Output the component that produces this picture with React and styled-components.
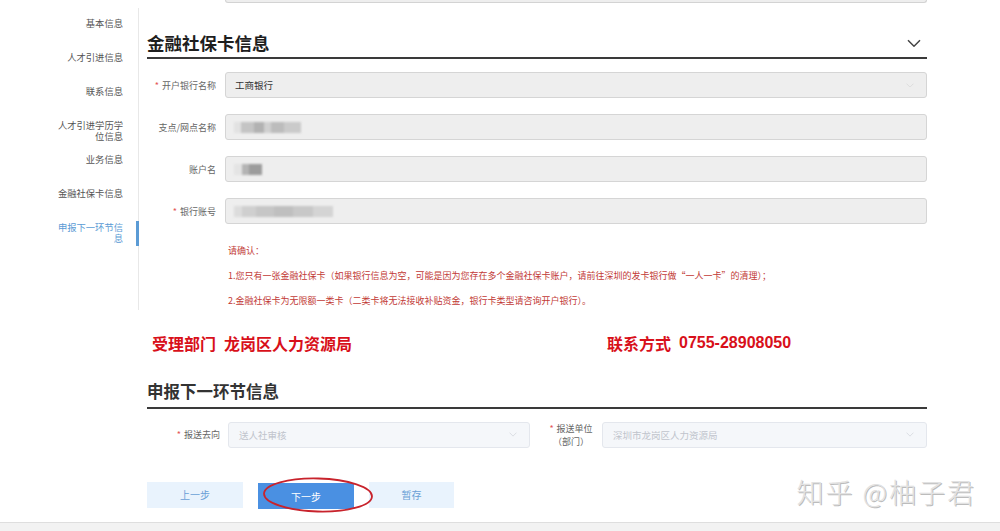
import React from "react";
import styled, { createGlobalStyle } from "styled-components";

// ================= Global =================

const GlobalStyle = createGlobalStyle`
  html, body {
    margin: 0;
    padding: 0;
    background: #ffffff;
  }
  body {
    font-family: "Noto Sans CJK SC", "Noto Sans", sans-serif;
    overflow: hidden;
  }
  * {
    box-sizing: border-box;
  }
`;

// ================= Layout =================

const Page = styled.div`
  position: relative;
  width: 1000px;
  height: 531px;
  overflow: hidden;
  display: flex;
  flex-direction: column;
`;

const Body = styled.div`
  display: flex;
  align-items: flex-start;
`;

const Sidebar = styled.nav`
  width: 139px;
  height: 302px;
  margin-top: 8px;
  padding: 9.5px 15px 0 56px;
  border-right: 1px solid #e8e8e8;
  flex-shrink: 0;
`;

const NavItem = styled.div`
  position: relative;
  height: 34px;
  font-size: 9.3px;
  line-height: 11px;
  text-align: right;
  color: ${({ $active }) => ($active ? "#5b9bd5" : "#555")};

  &::after {
    content: "";
    display: ${({ $active }) => ($active ? "block" : "none")};
    position: absolute;
    right: -16px;
    top: -1px;
    width: 3px;
    height: 25px;
    background: #5b9bd5;
  }
`;

const Main = styled.main`
  width: 780px;
  margin-left: 8px;
  display: flex;
  flex-direction: column;
`;

const PrevInput = styled.div`
  margin-left: 78px;
  height: 3px;
  background: #eeeeee;
  border: 1px solid #d3d3d3;
  border-top: none;
  border-radius: 0 0 3px 3px;
`;

const SectionHeader = styled.div`
  display: flex;
  align-items: center;
  justify-content: space-between;
  margin-top: ${({ $top }) => $top}px;
  padding-bottom: ${({ $pad }) => $pad}px;
  border-bottom: 2px solid #3a3a3a;
`;

const SectionTitle = styled.h2`
  margin: 0;
  font-size: ${({ $size }) => $size}px;
  line-height: 24px;
  font-weight: 700;
  color: ${({ $color }) => $color};
`;

const Collapse = styled.span`
  display: flex;
  margin-right: 6px;
  color: #444;
`;

// ================= Form =================

const FormRows = styled.div`
  display: flex;
  flex-direction: column;
  gap: 16px;
  margin-top: 13px;
`;

const Row = styled.div`
  display: flex;
  align-items: center;
  height: 26px;
`;

const NextRow = styled(Row)`
  margin-top: 13px;
`;

const Label = styled.label`
  width: ${({ $w }) => $w}px;
  margin-left: ${({ $ml }) => $ml || 0}px;
  margin-right: ${({ $gap }) => $gap}px;
  flex-shrink: 0;
  font-size: 9px;
  line-height: 13px;
  color: #666;
  white-space: nowrap;
  text-align: ${({ $center }) => ($center ? "center" : "right")};
`;

const Star = styled.span`
  color: #e45656;
  margin-right: 3px;
`;

const Field = styled.div`
  flex: ${({ $w }) => ($w ? "0 0 auto" : "1")};
  width: ${({ $w }) => ($w ? `${$w}px` : "auto")};
  height: 26px;
  display: flex;
  align-items: center;
  justify-content: space-between;
  padding: 0 12px 0 ${({ $pl }) => $pl || 9}px;
  background: ${({ $soft }) => ($soft ? "#f5f7fa" : "#eeeeee")};
  border: 1px solid ${({ $soft }) => ($soft ? "#e4e7ed" : "#d5d5d5")};
  border-radius: 3px;
  font-size: 9.5px;
  color: ${({ $soft }) => ($soft ? "#c0c4cc" : "#333")};
`;

const Mosaic = styled.span`
  display: inline-block;
  width: ${({ $w }) => $w}px;
  height: 11px;
  margin-left: -1px;
  background: ${({ $bg }) => $bg};
  filter: blur(1px);
`;

const Notes = styled.div`
  margin-top: 13.5px;
  padding-left: 81px;
  font-size: 9px;
  line-height: 25px;
  color: #c23a36;
`;

// ================= Contact =================

const Contact = styled.div`
  display: flex;
  margin-top: 20px;
  padding-left: 5px;
  font-size: 16px;
  line-height: 20px;
  font-weight: 700;
  color: #d8101a;
`;

const ContactItem = styled.div`
  width: ${({ $w }) => ($w ? `${$w}px` : "auto")};
  display: flex;
  gap: 8px;
`;

const Phone = styled.span`
  font-family: "Liberation Sans", Arial, sans-serif;
`;

// ================= Buttons =================

const Buttons = styled.div`
  display: flex;
  gap: 15px;
  margin-top: 34px;
`;

const ButtonWrap = styled.div`
  position: relative;
`;

const Button = styled.button`
  width: ${({ $w }) => $w}px;
  height: 26px;
  border: none;
  border-radius: 0;
  font-family: inherit;
  font-size: 10px;
  background: ${({ $primary }) => ($primary ? "#4a90e2" : "#e9f3fd")};
  color: ${({ $primary }) => ($primary ? "#ffffff" : "#6a9fd6")};
  cursor: pointer;
`;

const Circle = styled.svg`
  position: absolute;
  left: 4px;
  top: -6px;
  pointer-events: none;
`;

const Footer = styled.footer`
  height: 20px;
  margin-top: 13px;
  background: #f2f2f2;
  border-top: 1px solid #dedede;
`;

const Watermark = styled.div`
  position: absolute;
  right: 24px;
  top: 472px;
  font-size: 27px;
  font-weight: 300;
  letter-spacing: 2px;
  color: #e2e2e2;
  text-shadow: 1px 1px 0 #bcbcbc;
`;

// ================= Icons =================

const ChevronDown = ({ size = 14, color = "currentColor", width = 1.5 }) => (
  <svg width={size} height={size * 0.6} viewBox="0 0 14 8" fill="none">
    <polyline points="1 1 7 7 13 1" stroke={color} strokeWidth={width} />
  </svg>
);

// ================= Data =================

const navItems = [
  "基本信息",
  "人才引进信息",
  "联系信息",
  "人才引进学历学位信息",
  "业务信息",
  "金融社保卡信息",
  "申报下一环节信息",
];

const mosaicA =
  "linear-gradient(to right, #e2e2e2 0 10%, #c4c4c4 10% 30%, #b2b2b2 30% 45%, #d0d0d0 45% 55%, #bcbcbc 55% 75%, #cacaca 75% 100%)";
const mosaicB =
  "linear-gradient(to right, #e4e4e4 0 28%, #b4b4b4 28% 55%, #9c9c9c 55% 100%)";
const mosaicC =
  "linear-gradient(to right, #dcdcdc 0 8%, #cfcfcf 8% 22%, #c6c6c6 22% 40%, #bfbfbf 40% 60%, #c8c8c8 60% 80%, #d4d4d4 80% 100%)";

// ================= Main Component =================

const App = () => {
  return (
    <Page>
      <GlobalStyle />
      <Body>
        <Sidebar>
          {navItems.map((item, i) => (
            <NavItem key={item} $active={i === navItems.length - 1}>
              {item}
            </NavItem>
          ))}
        </Sidebar>

        <Main>
          <PrevInput />

          <SectionHeader $top={28} $pad={2}>
            <SectionTitle $size={17.5} $color="#1e1e1e">金融社保卡信息</SectionTitle>
            <Collapse>
              <ChevronDown size={14} />
            </Collapse>
          </SectionHeader>

          <FormRows>
            <Row>
              <Label $w={69} $gap={9}>
                <Star>*</Star>开户银行名称
              </Label>
              <Field>
                <span>工商银行</span>
                <ChevronDown size={8} color="#cfcfcf" width={1} />
              </Field>
            </Row>
            <Row>
              <Label $w={69} $gap={9}>支点/网点名称</Label>
              <Field>
                <Mosaic $w={67} $bg={mosaicA} />
              </Field>
            </Row>
            <Row>
              <Label $w={69} $gap={9}>账户名</Label>
              <Field>
                <Mosaic $w={28} $bg={mosaicB} />
              </Field>
            </Row>
            <Row>
              <Label $w={69} $gap={9}>
                <Star>*</Star>银行账号
              </Label>
              <Field>
                <Mosaic $w={99} $bg={mosaicC} />
              </Field>
            </Row>
          </FormRows>

          <Notes>
            <div>请确认：</div>
            <div>
              1.您只有一张金融社保卡（如果银行信息为空，可能是因为您存在多个金融社保卡账户，请前往深圳的发卡银行做“一人一卡”的清理）；
            </div>
            <div>2.金融社保卡为无限额一类卡（二类卡将无法接收补贴资金，银行卡类型请咨询开户银行）。</div>
          </Notes>

          <Contact>
            <ContactItem $w={455}>
              <span>受理部门</span>
              <span>龙岗区人力资源局</span>
            </ContactItem>
            <ContactItem>
              <span>联系方式</span>
              <Phone>0755-28908050</Phone>
            </ContactItem>
          </Contact>

          <SectionHeader $top={26} $pad={4}>
            <SectionTitle $size={16.5} $color="#333">申报下一环节信息</SectionTitle>
          </SectionHeader>

          <NextRow>
            <Label $w={73} $gap={8}>
              <Star>*</Star>报送去向
            </Label>
            <Field $w={302} $soft $pl={10}>
              <span>送人社审核</span>
              <ChevronDown size={8} color="#c8ccd2" width={1} />
            </Field>
            <Label $w={48} $ml={17} $gap={7} $center>
              <div>
                <Star>*</Star>报送单位
              </div>
              <div>（部门）</div>
            </Label>
            <Field $w={325} $soft $pl={10}>
              <span>深圳市龙岗区人力资源局</span>
              <ChevronDown size={8} color="#c8ccd2" width={1} />
            </Field>
          </NextRow>

          <Buttons>
            <Button $w={96}>上一步</Button>
            <ButtonWrap>
              <Button $w={96} $primary>
                下一步
              </Button>
              <Circle width="112" height="38" viewBox="0 0 112 38">
                <ellipse
                  cx="56"
                  cy="19"
                  rx="54"
                  ry="16.5"
                  fill="none"
                  stroke="#c8232c"
                  strokeWidth="1.8"
                  transform="rotate(1.5 56 19)"
                />
              </Circle>
            </ButtonWrap>
            <Button $w={85}>暂存</Button>
          </Buttons>
        </Main>
      </Body>
      <Footer />
      <Watermark>知乎 @柚子君</Watermark>
    </Page>
  );
};

export default App;
